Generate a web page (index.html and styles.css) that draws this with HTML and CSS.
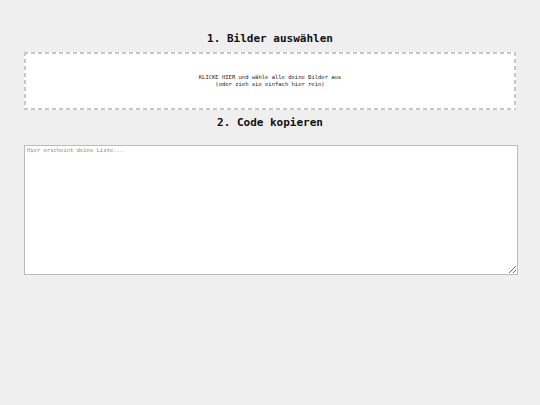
FILE: index.html
```html
<!DOCTYPE html>
<html lang="de">
<head>
<meta charset="utf-8">
<title>Bilder Liste</title>
<link rel="stylesheet" href="styles.css">
</head>
<body>
<main class="page">
  <h2 class="step-title step-title--first">1. Bilder auswählen</h2>
  <div class="dropzone">
    <p class="dropzone-text">KLICKE HIER und wähle alle deine Bilder aus<br>(oder zieh sie einfach hier rein)</p>
  </div>
  <h2 class="step-title">2. Code kopieren</h2>
  <textarea class="output" placeholder="Hier erscheint deine Liste..."></textarea>
</main>
</body>
</html>
```
FILE: styles.css
```css
html, body {
  margin: 0;
  padding: 0;
  background: #efefef;
}
body {
  font-family: "DejaVu Sans Mono", "Liberation Mono", monospace;
  color: #111;
}
.page {
  width: 492px;
  margin: 0 auto;
  padding-top: 32px;
  display: flex;
  flex-direction: column;
}
.step-title {
  margin: 6px 0 15px;
  font-size: 11px;
  line-height: 14px;
  font-weight: bold;
  text-align: center;
}
.step-title--first {
  margin: 0 0 6px;
}
.dropzone {
  box-sizing: border-box;
  height: 58px;
  padding: 2px;
  background-color: #fff;
  background-image:
    repeating-linear-gradient(90deg, #c8c8c8 0 4px, transparent 4px 7px),
    repeating-linear-gradient(90deg, #c8c8c8 0 4px, transparent 4px 7px),
    repeating-linear-gradient(180deg, #c8c8c8 0 4px, transparent 4px 7px),
    repeating-linear-gradient(180deg, #c8c8c8 0 4px, transparent 4px 7px);
  background-size: 100% 2px, 100% 2px, 2px 100%, 2px 100%;
  background-position: 0 0, 0 100%, 0 0, 100% 0;
  background-repeat: no-repeat;
  display: flex;
  align-items: center;
  justify-content: center;
}
.dropzone-text {
  margin: 0;
  font-size: 5.5px;
  line-height: 7px;
  text-align: center;
  color: #222;
}
.output {
  box-sizing: border-box;
  width: 494px;
  height: 130px;
  margin: 0;
  padding: 1px 2px;
  border: 1px solid #bbb;
  background: #fff;
  font-family: "DejaVu Sans Mono", "Liberation Mono", monospace;
  font-size: 5.5px;
  line-height: 7px;
  color: #222;
}
.output::placeholder {
  color: #888;
}
```
